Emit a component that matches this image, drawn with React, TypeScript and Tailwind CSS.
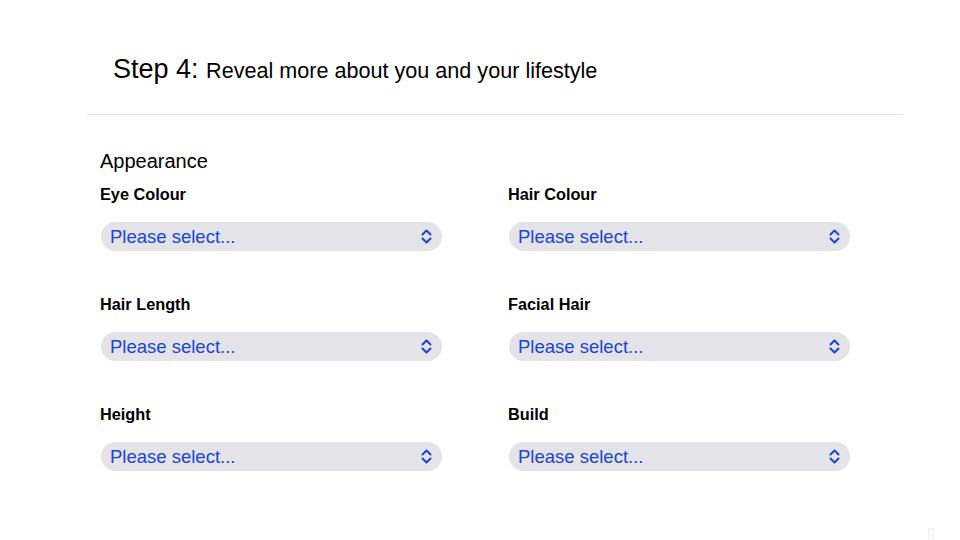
// Step 4 appearance form – select grid

const fields = [
  "Eye Colour",
  "Hair Colour",
  "Hair Length",
  "Facial Hair",
  "Height",
  "Build",
];

function Chevrons() {
  return (
    <svg width="11" height="15" viewBox="0 0 11 15" fill="none" className="shrink-0">
      <path
        d="M1.5 5.5L5.5 1.5L9.5 5.5M1.5 9.5L5.5 13.5L9.5 9.5"
        stroke="#1a44d6"
        strokeWidth="2"
        strokeLinecap="round"
        strokeLinejoin="round"
      />
    </svg>
  );
}

function SelectField({ label }: { label: string }) {
  return (
    <div className="flex flex-col">
      <div className="-ml-px h-[20px] text-[16.3px] leading-[20px] font-bold text-black">{label}</div>
      <div className="mt-[18px] flex h-[29px] w-[341px] items-center justify-between rounded-full bg-[#e3e3e8] pl-[9px] pr-[10px]">
        <span className="text-[18.5px] leading-[22px] text-[#1a44d6]">Please select...</span>
        <Chevrons />
      </div>
    </div>
  );
}

export default function App() {
  return (
    <div
      className="relative h-[540px] w-[960px] overflow-hidden bg-white text-black"
      style={{ fontFamily: '"Liberation Sans", Arial, sans-serif' }}
    >
      {/* Header */}
      <div className="h-[114px] pl-[113px] pt-[53px]">
        <div className="leading-[32px]">
          <span className="text-[27px]">Step 4: </span>
          <span className="text-[21.6px]">Reveal more about you and your lifestyle</span>
        </div>
      </div>
      <div className="ml-[87px] h-px w-[816px] bg-[#e4e4e4]" />

      {/* Form */}
      <div className="pl-[101px] pt-[34px]">
        <div className="-ml-px text-[20px] leading-[24px]">Appearance</div>
        <div className="mt-[11px] grid grid-cols-[342px_342px] gap-x-[66px] gap-y-[43px]">
          {fields.map((f) => (
            <SelectField key={f} label={f} />
          ))}
        </div>
      </div>

      <div className="absolute left-[928px] top-[528px] h-[14px] w-[6px] border border-[#efefef] bg-[#fafafa]" />
    </div>
  );
}
